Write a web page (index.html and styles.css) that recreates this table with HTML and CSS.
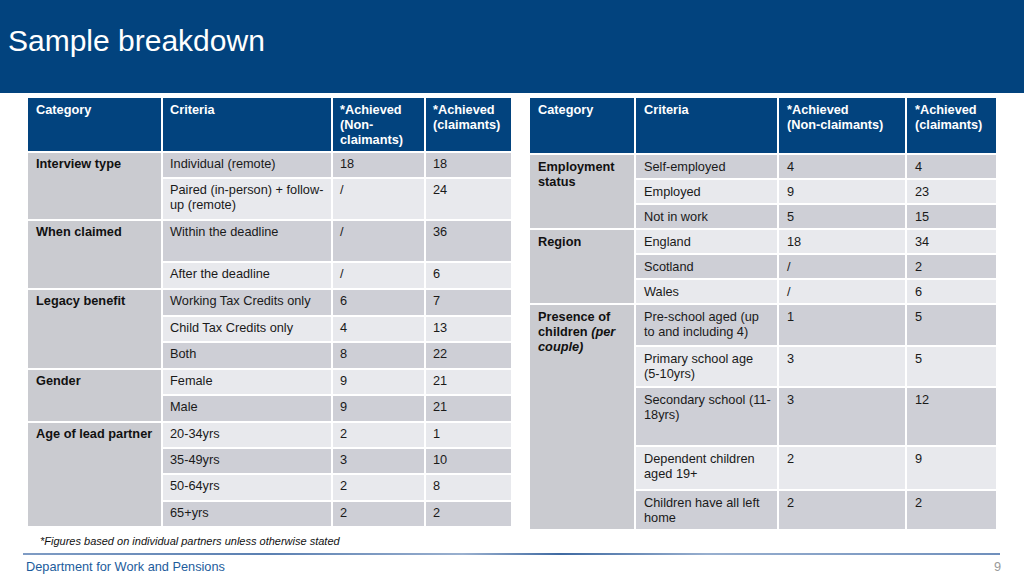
FILE: index.html
```html
<!DOCTYPE html>
<html lang="en">
<head>
<meta charset="utf-8">
<title>Sample breakdown</title>
<link rel="stylesheet" href="styles.css">
</head>
<body>
<header class="band"><h1 class="title">Sample breakdown</h1></header>
<main class="tables">
  <table class="grid grid-left">
    <colgroup><col class="c1"><col class="c2"><col class="c3"><col class="c4"></colgroup>
    <thead>
      <tr class="h53"><th>Category</th><th>Criteria</th><th>*Achieved (Non-claimants)</th><th>*Achieved (claimants)</th></tr>
    </thead>
    <tbody>
      <tr class="h24 dk"><td class="cat" rowspan="2">Interview type</td><td>Individual (remote)</td><td>18</td><td>18</td></tr>
      <tr class="h40 lt"><td>Paired (in-person) + follow-up (remote)</td><td>/</td><td>24</td></tr>
      <tr class="h40 dk"><td class="cat" rowspan="2">When claimed</td><td>Within the deadline</td><td>/</td><td>36</td></tr>
      <tr class="h25 lt"><td>After the deadline</td><td>/</td><td>6</td></tr>
      <tr class="h25 dk"><td class="cat" rowspan="3">Legacy benefit</td><td>Working Tax Credits only</td><td>6</td><td>7</td></tr>
      <tr class="h24 lt"><td>Child Tax Credits only</td><td>4</td><td>13</td></tr>
      <tr class="h25 dk"><td>Both</td><td>8</td><td>22</td></tr>
      <tr class="h24 lt"><td class="cat" rowspan="2">Gender</td><td>Female</td><td>9</td><td>21</td></tr>
      <tr class="h25 dk"><td>Male</td><td>9</td><td>21</td></tr>
      <tr class="h24 lt"><td class="cat" rowspan="4">Age of lead partner</td><td>20-34yrs</td><td>2</td><td>1</td></tr>
      <tr class="h24 dk"><td>35-49yrs</td><td>3</td><td>10</td></tr>
      <tr class="h25 lt"><td>50-64yrs</td><td>2</td><td>8</td></tr>
      <tr class="h24 dk"><td>65+yrs</td><td>2</td><td>2</td></tr>
    </tbody>
  </table>
  <table class="grid grid-right">
    <colgroup><col class="r1"><col class="r2"><col class="r3"><col class="r4"></colgroup>
    <thead>
      <tr class="h55"><th>Category</th><th>Criteria</th><th>*Achieved<br>(Non-claimants)</th><th>*Achieved (claimants)</th></tr>
    </thead>
    <tbody>
      <tr class="h23 dk"><td class="cat" rowspan="3">Employment status</td><td>Self-employed</td><td>4</td><td>4</td></tr>
      <tr class="h23 lt"><td>Employed</td><td>9</td><td>23</td></tr>
      <tr class="h23 dk"><td>Not in work</td><td>5</td><td>15</td></tr>
      <tr class="h23 lt"><td class="cat" rowspan="3">Region</td><td>England</td><td>18</td><td>34</td></tr>
      <tr class="h23 dk"><td>Scotland</td><td>/</td><td>2</td></tr>
      <tr class="h23 lt"><td>Wales</td><td>/</td><td>6</td></tr>
      <tr class="h40 dk"><td class="cat" rowspan="5">Presence of children <em>(per couple)</em></td><td>Pre-school aged (up to and including 4)</td><td>1</td><td>5</td></tr>
      <tr class="h39 lt"><td>Primary school age<br>(5-10yrs)</td><td>3</td><td>5</td></tr>
      <tr class="h57 dk"><td>Secondary school (11-18yrs)</td><td>3</td><td>12</td></tr>
      <tr class="h42 lt"><td>Dependent children aged 19+</td><td>2</td><td>9</td></tr>
      <tr class="h38 dk"><td>Children have all left home</td><td>2</td><td>2</td></tr>
    </tbody>
  </table>
</main>
<p class="note">*Figures based on individual partners unless otherwise stated</p>
<div class="rule"></div>
<footer class="foot">
  <span class="dept">Department for Work and Pensions</span>
  <span class="page">9</span>
</footer>
</body>
</html>
```

FILE: styles.css
```css
* { box-sizing: border-box; }
html, body { margin: 0; padding: 0; }
body {
  width: 1024px;
  height: 575px;
  overflow: hidden;
  background: #ffffff;
  font-family: "Liberation Sans", Arial, sans-serif;
  color: #1a1a1a;
}
.band {
  height: 93px;
  background: #02437e;
  padding: 23px 8px 0;
}
.title {
  margin: 0;
  font-weight: normal;
  font-size: 30px;
  line-height: 35px;
  color: #ffffff;
}
.tables {
  display: flex;
  align-items: flex-start;
  gap: 15px;
  height: 440px;
  padding: 3px 0 0 26px;
}
.grid {
  border-collapse: separate;
  border-spacing: 2px;
  table-layout: fixed;
  font-size: 12.75px;
  line-height: 15px;
}
.grid-left { width: 487px; }
.grid-right { width: 470px; }
.c1 { width: 133px; } .c2 { width: 168px; } .c3 { width: 91px; } .c4 { width: 85px; }
.r1 { width: 104px; } .r2 { width: 141px; } .r3 { width: 126px; } .r4 { width: 89px; }
.grid th, .grid td {
  text-align: left;
  vertical-align: top;
  padding: 3px 6px 2px 8px;
}
.grid th {
  background: #02437e;
  color: #ffffff;
  font-weight: bold;
  padding-top: 4px;
}
.grid-left td:not(.cat) { padding-left: 7px; }
.grid-left th:not(:first-child) { padding-left: 7px; }
.grid-right td { padding-top: 4px; }
.grid td.cat {
  background: #cacbd0;
  font-weight: bold;
  color: #111111;
  padding-right: 4px;
}
.grid td.cat em { font-style: italic; }
.dk td { background: #cecfd6; }
.lt td { background: #e8e9ed; }
.h23 { height: 23px; } .h24 { height: 24px; } .h25 { height: 25px; }
.h38 { height: 38px; } .h39 { height: 39px; } .h40 { height: 40px; }
.h42 { height: 42px; } .h53 { height: 53px; } .h55 { height: 55px; } .h57 { height: 57px; }
.note {
  margin: 2px 0 0;
  padding-left: 40px;
  font-size: 11px;
  line-height: 13px;
  font-style: italic;
  color: #111111;
}
.rule {
  margin: 5px 0 0 23px;
  width: 977px;
  height: 2px;
  background: linear-gradient(90deg, #7f9cc4 0%, #5b80b2 25%, #9ab0cf 45%, #3f6aa2 55%, #98afcf 70%, #6f8fbc 100%);
}
.foot {
  display: flex;
  justify-content: space-between;
  align-items: center;
  padding: 4px 23px 0 26px;
  font-size: 12.75px;
  line-height: 15px;
}
.dept { color: #1c5c9c; }
.page { color: #9a9a9a; }
```
